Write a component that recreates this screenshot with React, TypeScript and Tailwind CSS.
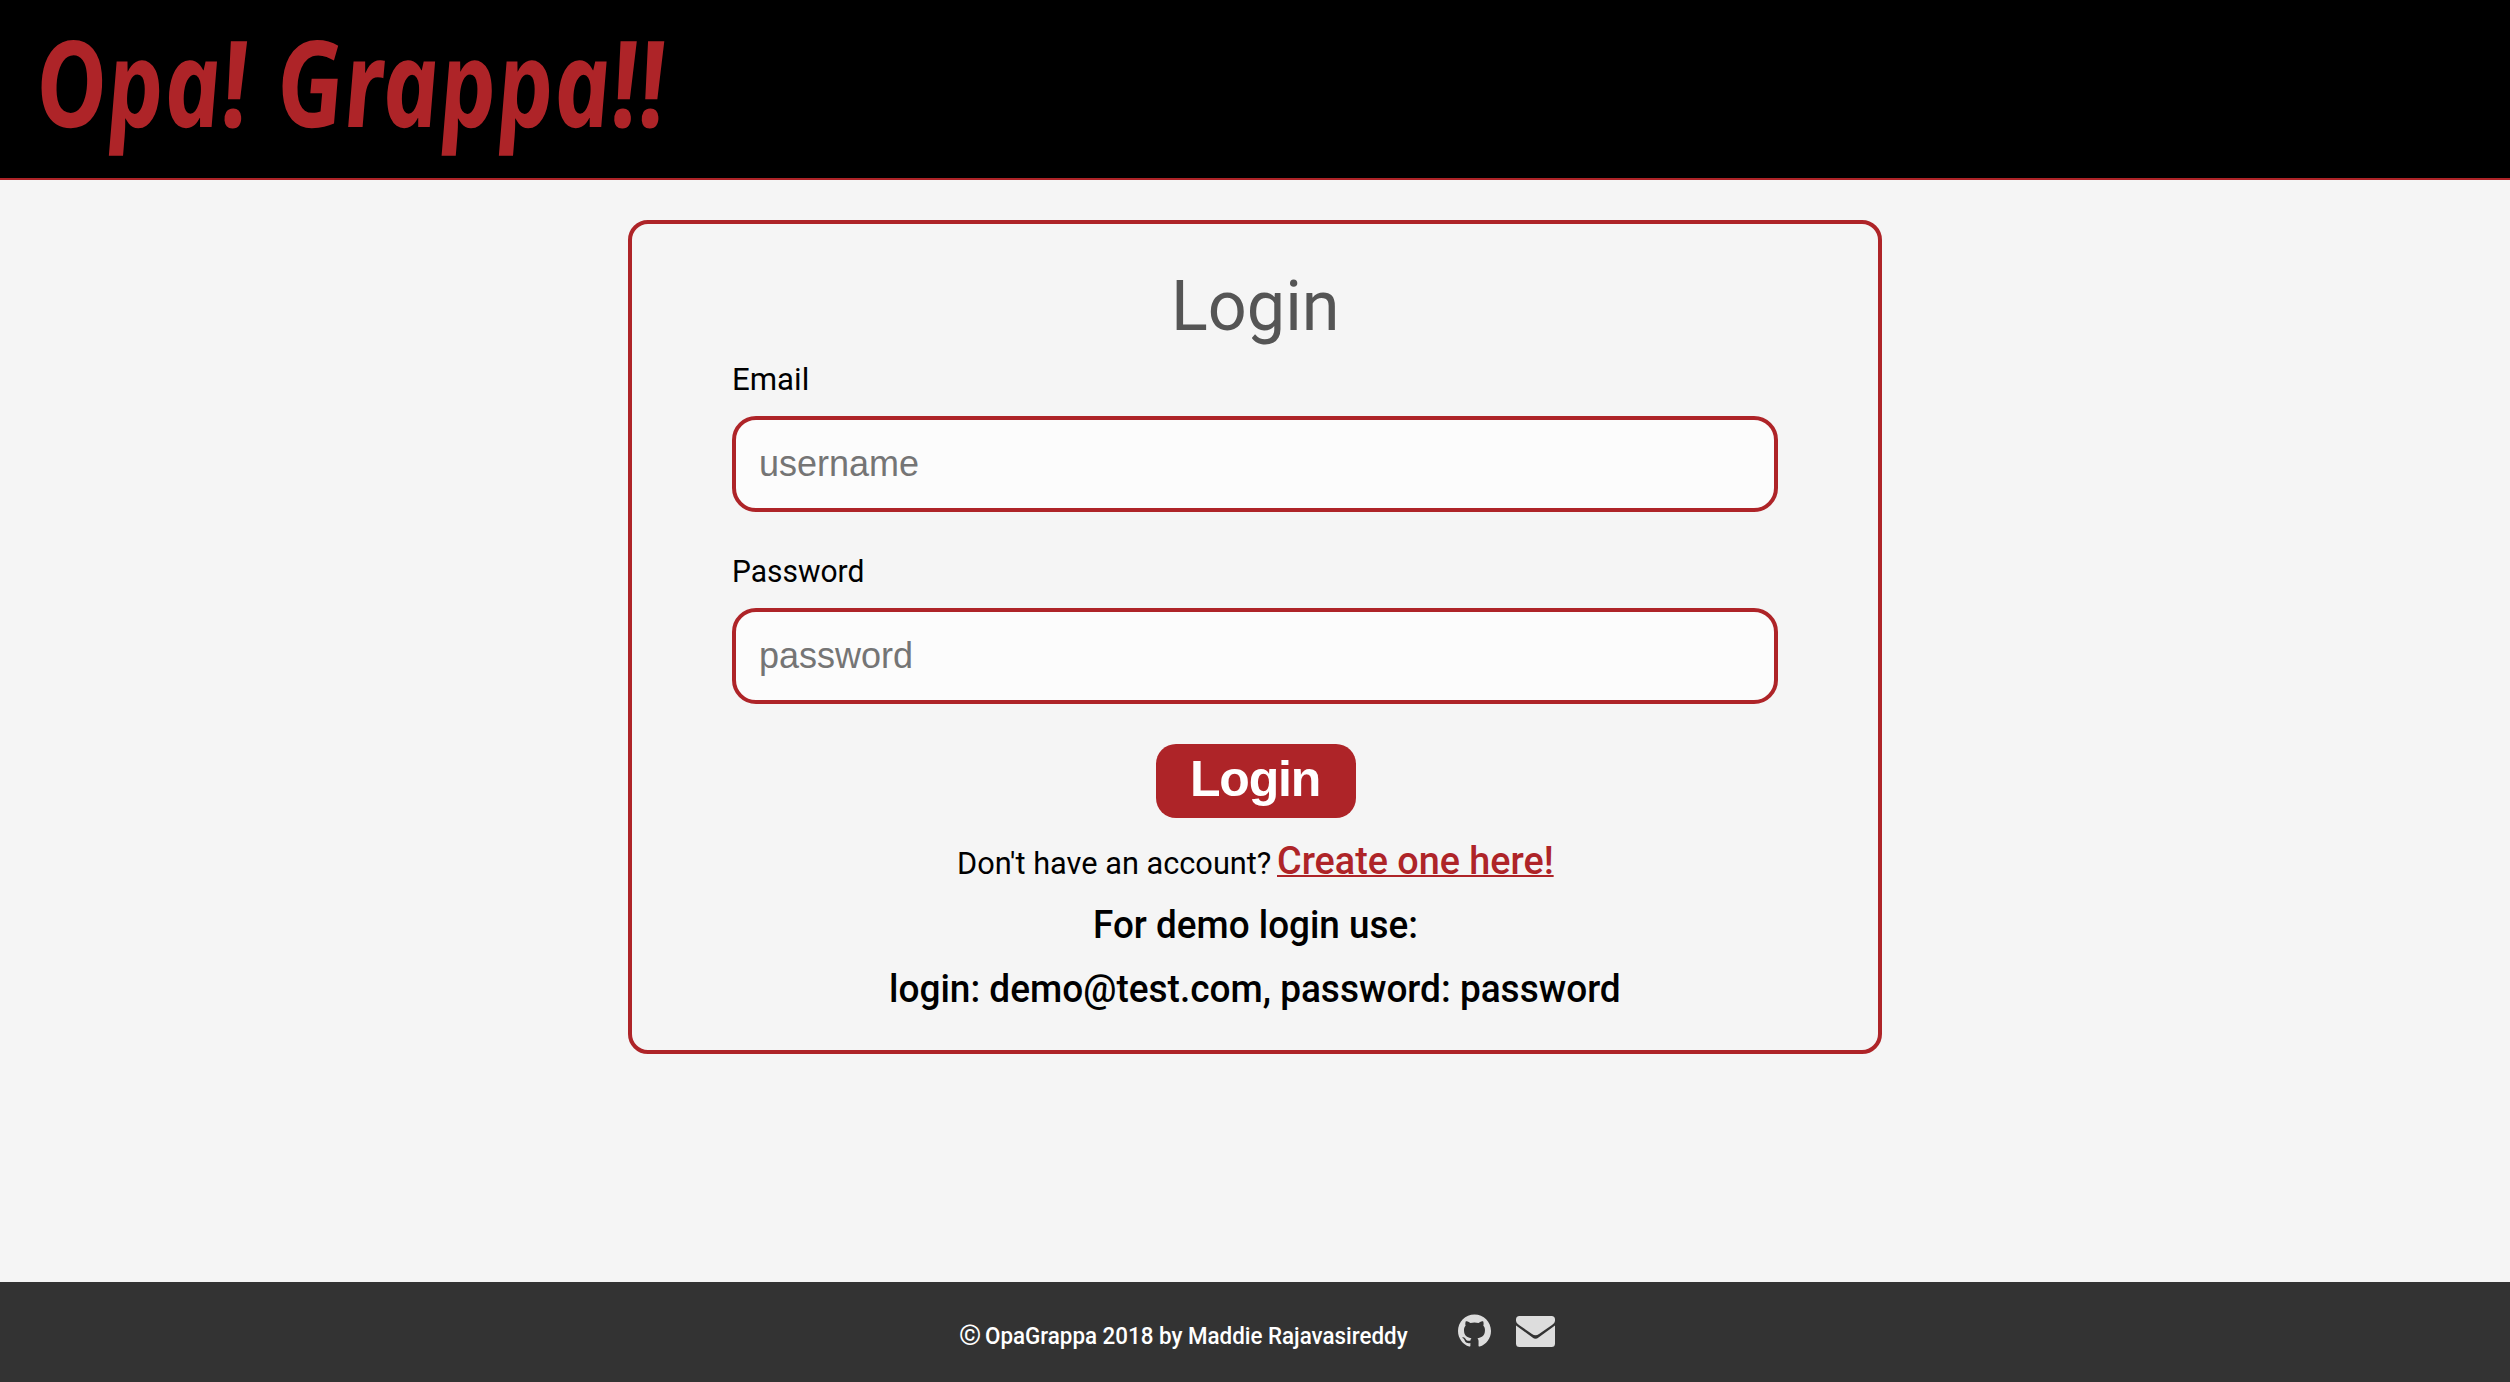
import React from "react";
import { SiGithub } from "react-icons/si";

const body = "font-['Roboto','Noto_Sans',sans-serif]";

function Fit({ text, width, className = "", skew = 0 }: { text: string; width: number; className?: string; skew?: number }) {
  const ref = React.useRef<HTMLSpanElement>(null);
  const [scale, setScale] = React.useState(1);
  React.useLayoutEffect(() => {
    if (ref.current) setScale(width / ref.current.offsetWidth);
  }, [width]);
  return (
    <span className="inline-flex whitespace-nowrap" style={{ width }}>
      <span
        ref={ref}
        className={"origin-left shrink-0 " + className}
        style={{ transform: `skewX(${skew}deg) scaleX(${scale})` }}
      >
        {text}
      </span>
    </span>
  );
}

function Field({ label, width, placeholder, type }: { label: string; width: number; placeholder: string; type: string }) {
  return (
    <label className="block h-48">
      <span className="flex h-[61px] items-start text-[32px] leading-[48px] text-black">
        <Fit text={label} width={width} />
      </span>
      <input
        type={type}
        placeholder={placeholder}
        className="block h-24 w-full rounded-3xl border-4 border-[#ae2428] bg-[#fcfcfc] px-[23px] font-['Liberation_Sans',sans-serif] text-[36px] text-black placeholder:text-[#757575] outline-none"
      />
    </label>
  );
}

function Envelope() {
  return (
    <svg viewBox="0 0 39 31" className="mt-[34px] ml-[25px] h-[31px] w-[39px] fill-[#ddd]">
      <path d="M3.5 0h32Q39 0 39 3.5V5Q39 7 36 9L23 18Q19.500 20.500 16 18L3 9Q0 7 0 5V3.500Q0 0 3.500 0Z" />
      <path d="M0 9.500L16.500 21.500Q19.500 24 22.500 21.500L39 9.500V27.500Q39 31 35.500 31H3.500Q0 31 0 27.500Z" />
    </svg>
  );
}

export default function App() {
  return (
    <div className={"flex h-[1382px] w-[2510px] flex-col bg-[#f5f5f5] " + body}>
      <header className="flex h-[180px] shrink-0 items-start border-b-2 border-[#ae2428] bg-black pl-[35px] font-['Noto_Sans',sans-serif] text-[120px] leading-[161px] font-bold text-[#ae2428] italic">
        <Fit text="Opa!" width={213} skew={5} />
        <span className="w-[28px]" />
        <Fit text="Grappa!!" width={389} skew={5} />
      </header>
      <main className="flex grow justify-center pt-10">
        <form className="h-[834px] w-[1254px] rounded-[20px] border-4 border-[#ae2428] px-[100px]">
          <h1 className="flex h-[131px] justify-center pt-[41px] text-[70px] leading-[82px] font-normal text-[#555]">
            <Fit text="Login" width={169} />
          </h1>
          <Field label="Email" width={77} placeholder="username" type="email" />
          <Field label="Password" width={132} placeholder="password" type="password" />
          <div className="flex flex-col items-center pt-[5px]">
            <button
              type="button"
              className="ml-0.5 h-[74px] w-[200px] rounded-[20px] bg-[#ae2428] pr-0.5 pb-[5px] font-['Liberation_Sans',sans-serif] text-[50px] leading-none font-bold tracking-[-1.2px] text-white"
            >
              Login
            </button>
            <p className="flex h-16 items-baseline pt-[11px] text-[32px] leading-[64px]">
              <Fit text="Don't have an account?" width={314} />
              <a href="#create" className="ml-1.5 h-16 text-[38px] font-medium text-[#ae2428]">
                <Fit text="Create one here!" width={277} className="underline decoration-2" />
              </a>
            </p>
            <p className="h-16 pt-[11px] text-[38px] leading-[64px] font-medium">
              <Fit text="For demo login use:" width={325} />
            </p>
            <p className="h-16 pt-[11px] text-[38px] leading-[64px] font-medium">
              <Fit text="login: demo@test.com, password: password" width={732} />
            </p>
          </div>
        </form>
      </main>
      <footer className="flex h-[100px] shrink-0 items-start bg-[#333] pl-[959px] text-white">
        <span className="flex pt-[37px] text-[24px] leading-[34px] font-medium">
          <Fit text="©" width={22} className="text-[27px] font-normal" />
          <span className="w-[4px]" />
          <Fit text="OpaGrappa 2018 by Maddie Rajavasireddy" width={423} />
        </span>
        <SiGithub className="mt-8 ml-[50px] h-[33px] w-[33px] text-[#ddd]" />
        <Envelope />
      </footer>
    </div>
  );
}
